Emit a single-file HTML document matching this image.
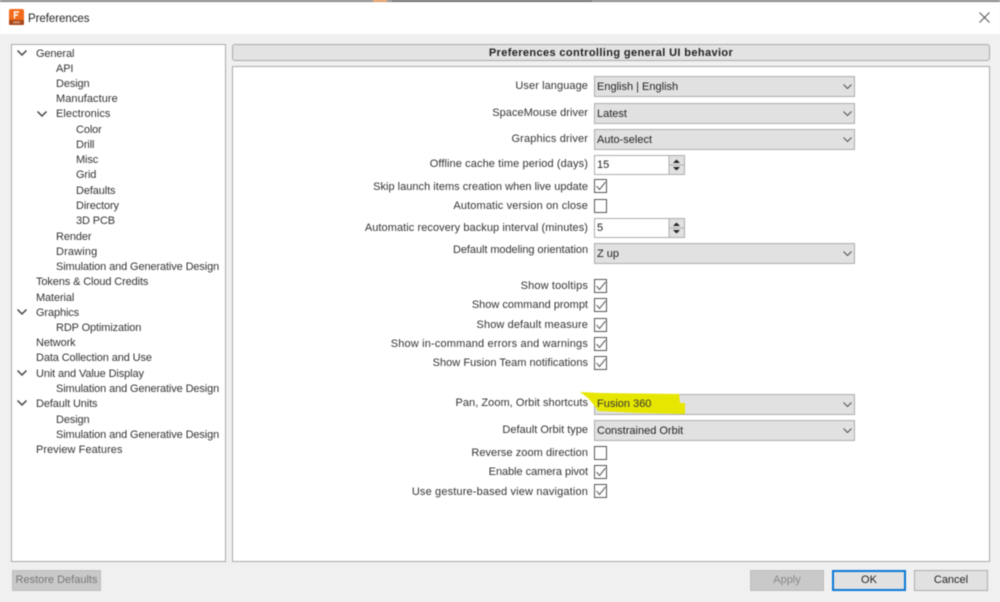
<!DOCTYPE html>
<html><head><meta charset="utf-8"><style>
html,body{margin:0;padding:0;width:1000px;height:602px;overflow:hidden;background:#f0f0f0}
#r{position:relative;width:1000px;height:602px;overflow:hidden;font:11px "Liberation Sans",sans-serif;color:#333;filter:blur(.4px)}
#r div,#r span{position:absolute;box-sizing:border-box;white-space:nowrap}
.t{height:14px;line-height:14px;letter-spacing:-.12px}
.l{right:412px;text-align:right;height:14px;line-height:14px;letter-spacing:0}
.c{left:594px;width:261px;height:21px;background:#e1e1e1;border:1px solid #adadad;line-height:20px;padding-left:2px;color:#222}
.s{left:594px;width:91px;height:20px;background:#fff;border:1px solid #adadad;line-height:19px;padding-left:2px;color:#222}
.b{left:594px;width:13px;height:14px;background:#fff;border:1px solid #555}
svg{position:absolute;overflow:visible}
.btn{top:570px;height:21px;text-align:center;line-height:19px;background:#e1e1e1;border:1px solid #adadad;color:#222}
</style></head><body><div id="r">
<div style="left:0;top:0;width:1000px;height:34px;background:#fff"></div>
<div style="left:0;top:0;width:1000px;height:2px;background:#8a8a8a"></div>
<div style="left:392px;top:0;width:200px;height:2px;background:#6e6e6e"></div>
<div style="left:373px;top:0;width:14px;height:2px;background:#e09a60"></div>
<svg style="left:9px;top:9px" width="15" height="16" viewBox="0 0 15 16"><rect x="0" y="0" width="15" height="16" rx="2" fill="#f26a1b"/><rect x="0" y="11" width="15" height="5" rx="1" fill="#a8481a"/><rect x="4" y="12.5" width="7" height="1.6" fill="#d9a080"/><path d="M5.5 9.5V3H10M5.500 6H9" stroke="#fff" stroke-width="1.4" fill="none"/></svg>
<div style="left:28px;top:12px;font-size:11.5px;line-height:14px;height:14px;color:#222;letter-spacing:-.05px">Preferences</div>
<svg style="left:979px;top:12px" width="11" height="11" viewBox="0 0 11 11"><path d="M.5.500L10.500 10.500M10.500.500L.5 10.500" stroke="#555" stroke-width="1" fill="none"/></svg>

<div style="left:11px;top:44px;width:215px;height:518px;background:#fff;border:1px solid #a9a9b0"></div>
<svg style="left:17px;top:50px" width="10" height="6"><path d="M.5.500L5 5L9.500.500" stroke="#444" stroke-width="1.500" fill="none"/></svg>
<svg style="left:37px;top:111px" width="10" height="6"><path d="M.5.500L5 5L9.500.500" stroke="#444" stroke-width="1.500" fill="none"/></svg>
<svg style="left:17px;top:309px" width="10" height="6"><path d="M.5.500L5 5L9.500.500" stroke="#444" stroke-width="1.500" fill="none"/></svg>
<svg style="left:17px;top:370px" width="10" height="6"><path d="M.5.500L5 5L9.500.500" stroke="#444" stroke-width="1.500" fill="none"/></svg>
<svg style="left:17px;top:400px" width="10" height="6"><path d="M.5.500L5 5L9.500.500" stroke="#444" stroke-width="1.500" fill="none"/></svg>
<div class="t" style="left:36px;top:47px">General</div>
<div class="t" style="left:56px;top:62px">API</div>
<div class="t" style="left:56px;top:77px">Design</div>
<div class="t" style="left:56px;top:92px;letter-spacing:.06px">Manufacture</div>
<div class="t" style="left:56px;top:107px;letter-spacing:.06px">Electronics</div>
<div class="t" style="left:76px;top:123px">Color</div>
<div class="t" style="left:76px;top:138px">Drill</div>
<div class="t" style="left:76px;top:153px">Misc</div>
<div class="t" style="left:76px;top:168px">Grid</div>
<div class="t" style="left:76px;top:184px">Defaults</div>
<div class="t" style="left:76px;top:199px">Directory</div>
<div class="t" style="left:76px;top:214px">3D PCB</div>
<div class="t" style="left:56px;top:230px">Render</div>
<div class="t" style="left:56px;top:245px;letter-spacing:.15px">Drawing</div>
<div class="t" style="left:56px;top:260px">Simulation and Generative Design</div>
<div class="t" style="left:36px;top:275px">Tokens &amp; Cloud Credits</div>
<div class="t" style="left:36px;top:291px">Material</div>
<div class="t" style="left:36px;top:306px">Graphics</div>
<div class="t" style="left:56px;top:321px">RDP Optimization</div>
<div class="t" style="left:36px;top:336px">Network</div>
<div class="t" style="left:36px;top:351px">Data Collection and Use</div>
<div class="t" style="left:36px;top:367px">Unit and Value Display</div>
<div class="t" style="left:56px;top:382px">Simulation and Generative Design</div>
<div class="t" style="left:36px;top:397px">Default Units</div>
<div class="t" style="left:56px;top:413px">Design</div>
<div class="t" style="left:56px;top:428px">Simulation and Generative Design</div>
<div class="t" style="left:36px;top:443px;letter-spacing:.06px">Preview Features</div>

<div style="left:232px;top:44px;width:758px;height:17px;background:#e3e3e3;border:1px solid #a9a9a9;border-radius:3px;text-align:center;font-weight:bold;line-height:16px;color:#222;letter-spacing:.38px">Preferences controlling general UI behavior</div>
<div style="left:232px;top:66px;width:758px;height:496px;background:#fff;border:1px solid #a9a9b0"></div>

<div class="l" style="top:79px;letter-spacing:.08px">User language</div>
<div class="l" style="top:106px;letter-spacing:.06px">SpaceMouse driver</div>
<div class="l" style="top:132px;letter-spacing:.13px">Graphics driver</div>
<div class="l" style="top:157px;letter-spacing:.1px">Offline cache time period (days)</div>
<div class="l" style="top:180px;letter-spacing:.02px">Skip launch items creation when live update</div>
<div class="l" style="top:199px;letter-spacing:.12px">Automatic version on close</div>
<div class="l" style="top:221px;letter-spacing:.07px">Automatic recovery backup interval (minutes)</div>
<div class="l" style="top:243px;letter-spacing:-.07px">Default modeling orientation</div>
<div class="l" style="top:279px;letter-spacing:.15px">Show tooltips</div>
<div class="l" style="top:298px">Show command prompt</div>
<div class="l" style="top:318px;letter-spacing:.1px">Show default measure</div>
<div class="l" style="top:337px;letter-spacing:.17px">Show in-command errors and warnings</div>
<div class="l" style="top:356px;letter-spacing:.03px">Show Fusion Team notifications</div>
<div class="l" style="top:396px;letter-spacing:.04px">Pan, Zoom, Orbit shortcuts</div>
<div class="l" style="top:423px">Default Orbit type</div>
<div class="l" style="top:446px;letter-spacing:.05px">Reverse zoom direction</div>
<div class="l" style="top:465px;letter-spacing:-.05px">Enable camera pivot</div>
<div class="l" style="top:485px;letter-spacing:.15px">Use gesture-based view navigation</div>

<div class="c" style="top:76px">English | English</div>
<div class="c" style="top:103px">Latest</div>
<div class="c" style="top:129px">Auto-select</div>
<div class="c" style="top:243px">Z up</div>
<div class="c" style="top:394px"></div>
<div class="c" style="top:420px">Constrained Orbit</div>
<svg style="left:843px;top:84px" width="9" height="5"><path d="M.5.500L4.500 4.500L8.500.500" stroke="#555" stroke-width="1.100" fill="none"/></svg>
<svg style="left:843px;top:111px" width="9" height="5"><path d="M.5.500L4.500 4.500L8.500.500" stroke="#555" stroke-width="1.100" fill="none"/></svg>
<svg style="left:843px;top:137px" width="9" height="5"><path d="M.5.500L4.500 4.500L8.500.500" stroke="#555" stroke-width="1.100" fill="none"/></svg>
<svg style="left:843px;top:251px" width="9" height="5"><path d="M.5.500L4.500 4.500L8.500.500" stroke="#555" stroke-width="1.100" fill="none"/></svg>
<svg style="left:843px;top:402px" width="9" height="5"><path d="M.5.500L4.500 4.500L8.500.500" stroke="#555" stroke-width="1.100" fill="none"/></svg>
<svg style="left:843px;top:428px" width="9" height="5"><path d="M.5.500L4.500 4.500L8.500.500" stroke="#555" stroke-width="1.100" fill="none"/></svg>

<div class="s" style="top:155px">15</div>
<div class="s" style="top:218px">5</div>
<svg style="left:669px;top:156px" width="15" height="18"><rect width="15" height="18" fill="#e1e1e1"/><path d="M0 9H15M0 0V18" stroke="#adadad"/><path d="M4 7L7.500 3.500L11 7ZM4 11H11L7.500 14.500Z" fill="#222"/></svg>
<svg style="left:669px;top:219px" width="15" height="18"><rect width="15" height="18" fill="#e1e1e1"/><path d="M0 9H15M0 0V18" stroke="#adadad"/><path d="M4 7L7.500 3.500L11 7ZM4 11H11L7.500 14.500Z" fill="#222"/></svg>

<div class="b" style="top:179px"></div><svg style="left:596px;top:181px" width="10" height="10"><path d="M.5 5L3.500 8.500L9.500 1" stroke="#666" stroke-width="1.100" fill="none"/></svg>
<div class="b" style="top:199px"></div>
<div class="b" style="top:279px"></div><svg style="left:596px;top:281px" width="10" height="10"><path d="M.5 5L3.500 8.500L9.500 1" stroke="#666" stroke-width="1.100" fill="none"/></svg>
<div class="b" style="top:298px"></div><svg style="left:596px;top:300px" width="10" height="10"><path d="M.5 5L3.500 8.500L9.500 1" stroke="#666" stroke-width="1.100" fill="none"/></svg>
<div class="b" style="top:318px"></div><svg style="left:596px;top:320px" width="10" height="10"><path d="M.5 5L3.500 8.500L9.500 1" stroke="#666" stroke-width="1.100" fill="none"/></svg>
<div class="b" style="top:337px"></div><svg style="left:596px;top:339px" width="10" height="10"><path d="M.5 5L3.500 8.500L9.500 1" stroke="#666" stroke-width="1.100" fill="none"/></svg>
<div class="b" style="top:356px"></div><svg style="left:596px;top:358px" width="10" height="10"><path d="M.5 5L3.500 8.500L9.500 1" stroke="#666" stroke-width="1.100" fill="none"/></svg>
<div class="b" style="top:446px"></div>
<div class="b" style="top:465px"></div><svg style="left:596px;top:467px" width="10" height="10"><path d="M.5 5L3.500 8.500L9.500 1" stroke="#666" stroke-width="1.100" fill="none"/></svg>
<div class="b" style="top:484px"></div><svg style="left:596px;top:486px" width="10" height="10"><path d="M.5 5L3.500 8.500L9.500 1" stroke="#666" stroke-width="1.100" fill="none"/></svg>

<svg style="left:0;top:0" width="1000" height="602"><path d="M580 392L600 393L679 394L680 403L685 403L685 414L640 413L598 411L594 405L588 398Z" fill="#e6e600"/></svg>
<div style="left:597px;top:397px;height:14px;line-height:14px;color:#333">Fusion 360</div>

<div class="btn" style="left:12px;width:89px;background:#c9c9c9;border-color:#bdbdbd;color:#777">Restore Defaults</div>
<div class="btn" style="left:750px;width:74px;background:#c9c9c9;border-color:#bdbdbd;color:#8a8a8a">Apply</div>
<div class="btn" style="left:832px;width:74px;border:2px solid #0a78d7;line-height:17px">OK</div>
<div class="btn" style="left:914px;width:74px">Cancel</div>
</div></body></html>
